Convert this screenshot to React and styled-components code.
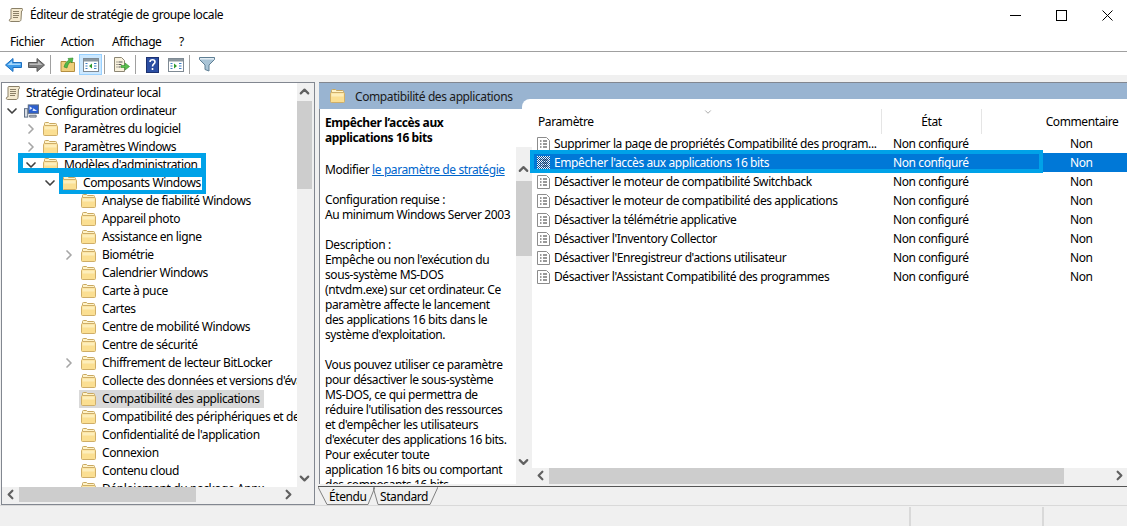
import React from "react";
import styled, { createGlobalStyle } from "styled-components";
import { ChevronDown, ChevronRight, ChevronUp, ChevronLeft } from "lucide-react";

const GlobalStyle = createGlobalStyle`
html, body { margin: 0; padding: 0; background: #f0f0f0; overflow: hidden; }
* { box-sizing: border-box; }
body { font-family: "Noto Sans", "Open Sans", sans-serif; font-size: 12px; color: #000; letter-spacing: -0.4px; }
`;

const Window = styled.div`
position: relative;
width: 1127px;
height: 526px;
display: flex;
flex-direction: column;
overflow: hidden;
`;

const TitleBar = styled.div`
height: 30px;
background: #fff;
display: flex;
align-items: center;
padding-left: 8px;
gap: 7px;
flex: none;
overflow: hidden;
`;

const TitleText = styled.span`
flex: 1;
line-height: 30px;
`;

const WinButton = styled.div`
width: 46px;
height: 30px;
flex: none;
display: flex;
align-items: center;
justify-content: center;
`;

const WinButtons = styled.div`
display: flex;
margin-right: -3px;
`;

const MenuBar = styled.div`
height: 22px;
background: #fff;
display: flex;
align-items: center;
padding: 1px 0 0 10px;
gap: 16px;
flex: none;
border-bottom: 1px solid #a0a0a0;
`;

const MenuItem = styled.span`
width: ${p => p.$w}px;
`;

const Toolbar = styled.div`
height: 23px;
background: #fff;
display: flex;
align-items: flex-start;
padding: 2px 0 0 2px;
flex: none;
`;

const ToolButton = styled.div`
width: 23px;
height: 21px;
display: flex;
align-items: center;
justify-content: center;
background: ${p => (p.$active ? "#cce8ff" : "transparent")};
border: 1px solid ${p => (p.$active ? "#99d1ff" : "transparent")};
`;

const ToolSep = styled.div`
width: 1px;
height: 19px;
background: #a0a0a0;
margin: 1px 5px 0 2px;
`;

const Main = styled.div`
flex: 1;
display: flex;
padding: 7px 0 0 1px;
min-height: 0;
`;

const TreePane = styled.div`
width: 314px;
height: 423px;
border: 1px solid #828790;
background: #f0f0f0;
display: grid;
grid-template-columns: 295px 15px;
grid-template-rows: 404px 15px;
padding: 0 1px 1px 0;
`;

const TreeList = styled.div`
background: #fff;
overflow: hidden;
padding-top: 1px;
`;

const Row = styled.div`
height: 18px;
display: flex;
align-items: center;
padding-left: ${p => p.$depth * 19 + 3}px;
white-space: nowrap;
position: relative;
`;

const Arrow = styled.span`
position: absolute;
left: ${p => p.$depth * 19 - 17}px;
top: 1px;
width: 16px;
height: 16px;
display: flex;
color: ${p => (p.$open ? "#404040" : "#a6a6a6")};
`;

const RowLabel = styled.span`
margin-left: 5px;
padding: 0 1px;
line-height: 18px;
`;

const FolderWrap = styled.div`
display: flex;
align-items: center;
background: ${p => (p.$selected ? "#d9d9d9" : "transparent")};
height: 18px;
padding: 0 3px 0 2px;
margin-left: -2px;
`;

const VScroll = styled.div`
position: relative;
background: #f0f0f0;
color: #606060;
`;

const HScroll = styled.div`
position: relative;
background: #f0f0f0;
color: #606060;
`;

const ThumbV = styled.div`
position: absolute;
left: 0;
right: 0;
top: ${p => p.$top}px;
height: ${p => p.$size}px;
background: #cdcdcd;
`;

const ThumbH = styled.div`
position: absolute;
top: 0;
bottom: 0;
left: ${p => p.$left}px;
width: ${p => p.$size}px;
background: #cdcdcd;
`;

const ScrollBtn = styled.span`
position: absolute;
display: flex;
align-items: center;
justify-content: center;
width: 15px;
height: 15px;
${p => p.$pos}
`;

const RightPane = styled.div`
width: 808px;
margin-left: 4px;
display: flex;
flex-direction: column;
border-top: 1px solid #828790;
`;

const Band = styled.div`
height: 26px;
background: #99b4d1;
display: flex;
align-items: flex-start;
padding: 6px 0 0 11px;
gap: 10px;
flex: none;
`;

const BandText = styled.span`
line-height: 16px;
color: #1a1a1a;
`;

const Content = styled.div`
flex: none;
height: 375px;
display: grid;
grid-template-columns: 197px 16px 1fr;
background: #fff;
position: relative;
`;

const Description = styled.div`
padding: 6px 0 0 5px;
line-height: 15px;
height: 375px;
overflow: hidden;
border-left: 1px solid #828790;
white-space: nowrap;
`;

const DescTitle = styled.div`
font-weight: 700;
margin-bottom: 17px;
`;

const DescBlock = styled.div`
margin-bottom: 15px;
`;

const Link = styled.span`
color: #0066cc;
text-decoration: underline;
`;

const DescScroll = styled.div`
position: relative;
margin-top: 38px;
background: #f0f0f0;
color: #606060;
`;

const ListPane = styled.div`
position: relative;
display: flex;
flex-direction: column;
min-width: 0;
`;

const Corner = styled.div`
position: absolute;
left: -10px;
top: -10px;
width: 605px;
height: 10px;
background: #fff;
border-top-left-radius: 8px;
`;

const ListHeader = styled.div`
display: grid;
grid-template-columns: 350px 100px 1fr;
height: 25px;
flex: none;
position: relative;
`;

const HeaderCell = styled.div`
line-height: 25px;
text-align: ${p => p.$align || "center"};
padding-left: ${p => p.$pad || 0}px;
border-right: ${p => (p.$last ? "none" : "1px solid #e5e5e5")};
`;

const SortMark = styled.span`
position: absolute;
left: 171px;
top: -2px;
display: flex;
color: #9a9a9a;
`;

const ListRows = styled.div`
flex: 1;
min-height: 0;
`;

const ListRow = styled.div`
display: grid;
grid-template-columns: 356px 177px 1fr;
height: 19px;
line-height: 19px;
padding-left: 5px;
white-space: nowrap;
background: ${p => (p.$selected ? "#0078d7" : "transparent")};
color: ${p => (p.$selected ? "#fff" : "#000")};
`;

const NameCell = styled.div`
display: flex;
align-items: center;
gap: 4px;
overflow: hidden;
`;

const ListHScroll = styled.div`
position: relative;
height: 16px;
flex: none;
background: #f0f0f0;
color: #606060;
`;

const TabStrip = styled.div`
height: 19px;
flex: none;
margin-top: 2px;
border-top: 1px solid #555;
display: flex;
margin-left: -1px;
`;

const Tab = styled.div`
position: relative;
width: ${p => p.$w}px;
height: 18px;
margin-right: -2px;
padding-left: ${p => p.$pad}px;
line-height: 19px;
`;

const TabOutline = styled.svg`
position: absolute;
left: 0;
top: 0;
`;

const TabLabel = styled.span`
position: relative;
`;

const StatusBar = styled.div`
height: 21px;
flex: none;
border-top: 1px solid #d9d9d9;
display: flex;
justify-content: flex-end;
`;

const StatusCell = styled.div`
width: ${p => p.$w}px;
border-left: 2px solid #d9d9d9;
margin-top: 1px;
`;

const Marker = styled.div`
position: absolute;
left: ${p => p.$x}px;
top: ${p => p.$y}px;
width: ${p => p.$w}px;
height: ${p => p.$h}px;
border: ${p => p.$b}px solid #00a2e8;
pointer-events: none;
`;

const Folder = () => (
  <svg width="15" height="14" viewBox="0 0 15 14" style={{ flex: "none" }}>
    <path d="M1.5 3 V1.5 a1 1 0 0 1 1-1 h3 l1 1 h6 a1 1 0 0 1 1 1 v1" fill="#fff3c8" stroke="#c9a860" />
    <rect x="0.5" y="3.5" width="14" height="10" rx="1" fill="#fbdf92" stroke="#cfae68" />
    <rect x="1.5" y="4.5" width="12" height="3" fill="#fdeebb" />
  </svg>
);

const Parchment = () => (
  <svg width="15" height="16" viewBox="0 0 15 16" style={{ flex: "none" }}>
    <path d="M4 1.5 h10 c1 0 1 2.5-.5 2.5 L13 12.5 c0 1.2-1 2-2 2 H2.5 c-1.6 0-1.6-2.5 0-2.5 H3 V3 c0-1 0-1.5 1-1.5z" fill="#f4ead0" stroke="#8a8068" />
    <path d="M5 4.5h6M5 6.5h6M5 8.5h6M5 10.5h5" stroke="#8a8068" />
  </svg>
);

const Computer = () => (
  <svg width="15" height="16" viewBox="0 0 16 16" style={{ flex: "none" }}>
    <rect x="4.5" y="1.5" width="11" height="9" fill="#2c5fd0" stroke="#5a6a80" />
    <path d="M6 3l3 2-3 2zM10 5l4 3H9z" fill="#dfeaff" />
    <rect x="0.5" y="5.5" width="3.5" height="9" fill="#d8dde4" stroke="#5a6a80" />
    <path d="M6 12.5h7v2H6z" fill="#b8c0cc" stroke="#6a7280" />
  </svg>
);

const PolicyIcon = ({ selected }) =>
  selected ? (
    <svg width="13" height="14" viewBox="0 0 13 14" style={{ flex: "none" }}>
      <defs>
        <pattern id="dither" width="2" height="2" patternUnits="userSpaceOnUse">
          <rect width="2" height="2" fill="#0a4f96" />
          <rect width="1" height="1" fill="#f2f6fb" />
          <rect x="1" y="1" width="1" height="1" fill="#f2f6fb" />
        </pattern>
      </defs>
      <rect width="13" height="14" fill="url(#dither)" />
      <path d="M3 4h1M3 7h1M3 10h1M5.5 4h5M5.5 7h5M5.5 10h5" stroke="#10305a" />
    </svg>
  ) : (
    <svg width="13" height="14" viewBox="0 0 13 14" style={{ flex: "none" }}>
      <path d="M0.5 0.5h9l3 3v10h-12z" fill="#fff" stroke="#8c8c8c" />
      <path d="M3 4h1.5M3 7h1.5M3 10h1.5M6 4h4M6 7h4M6 10h4" stroke="#333" />
    </svg>
  );

const BackIcon = () => (
  <svg width="17" height="14" viewBox="0 0 17 14">
    <path d="M8 0.5 L0.5 7 L8 13.5 V9.5 H16.5 V4.5 H8z" fill="#3d9be9" stroke="#1c6fc0" />
    <path d="M7 3 L2.5 7 H15.5 V5.5 H7z" fill="#a8d8fb" />
  </svg>
);

const ForwardIcon = () => (
  <svg width="17" height="14" viewBox="0 0 17 14">
    <path d="M9 0.5 L16.5 7 L9 13.5 V9.5 H0.5 V4.5 H9z" fill="#7d7d7d" stroke="#5a5a5a" />
    <path d="M10 3 L14.5 7 H1.5 V5.5 H10z" fill="#bdbdbd" />
  </svg>
);

const UpFolderIcon = () => (
  <svg width="16" height="16" viewBox="0 0 16 16">
    <path d="M1 4.5h5l1 1h7.5v9H1z" fill="#f0cf7c" stroke="#b58f40" />
    <path d="M4 10c1-4 3-6 5-7l-1-1.5 5-.5-1 5-1.5-1.5C9 6 7.5 8 7 11z" fill="#53b848" stroke="#2f8a2b" strokeWidth="0.6" />
  </svg>
);

const PanelIcon = ({ variant }) => (
  <svg width="16" height="14" viewBox="0 0 16 14">
    <rect x="0.5" y="0.5" width="15" height="13" fill="#fff" stroke="#7f8a94" />
    <rect x="1" y="1" width="14" height="2.5" fill="#8c979f" />
    <path d="M2.5 5.5h2M2.5 8h2M2.5 10.5h2M11 5.5h2.5M11 8h2.5M11 10.5h2.5" stroke="#3f7fc4" />
    {variant === "left" ? (
      <path d="M9 5.5v5l-3-2.5z" fill="#2f9a2f" />
    ) : (
      <path d="M6 5.5v5l3-2.5z" fill="#2f9a2f" />
    )}
  </svg>
);

const ExportIcon = () => (
  <svg width="17" height="16" viewBox="0 0 17 16">
    <path d="M1.5 0.5h7l3 3v11h-10z" fill="#f8f1dc" stroke="#8c8674" />
    <path d="M3.5 5h1M3.5 7.5h1M3.5 10h1M5.5 5h4M5.5 7.5h3M5.5 10h2" stroke="#555" />
    <path d="M8 8.5h4V6l4.5 3.5L12 13v-2.5H8z" fill="#5cbf4f" stroke="#3b9a33" strokeWidth="0.7" />
  </svg>
);

const HelpIcon = () => (
  <svg width="13" height="16" viewBox="0 0 13 16">
    <rect x="0.5" y="0.5" width="12" height="15" fill="#2b4ea3" stroke="#1c3170" />
    <path d="M4 5c0-3 5-3 5 0 0 2-2.5 2-2.5 4.5M6.5 11v2" fill="none" stroke="#fff" strokeWidth="1.6" />
  </svg>
);

const FilterIcon = () => (
  <svg width="16" height="15" viewBox="0 0 16 15">
    <path d="M0.5 0.5h15v2L10 8v6l-4-1.5V8L0.5 2.5z" fill="#a9c4d6" stroke="#5f7f94" />
    <path d="M1 1h14v1.5H1z" fill="#e2edf4" />
  </svg>
);

const treeRows = [
  { label: "Paramètres du logiciel", depth: 2, arrow: "closed" },
  { label: "Paramètres Windows", depth: 2, arrow: "closed" },
  { label: "Modèles d'administration", depth: 2, arrow: "open" },
  { label: "Composants Windows", depth: 3, arrow: "open" },
  { label: "Analyse de fiabilité Windows", depth: 4 },
  { label: "Appareil photo", depth: 4 },
  { label: "Assistance en ligne", depth: 4 },
  { label: "Biométrie", depth: 4, arrow: "closed" },
  { label: "Calendrier Windows", depth: 4 },
  { label: "Carte à puce", depth: 4 },
  { label: "Cartes", depth: 4 },
  { label: "Centre de mobilité Windows", depth: 4 },
  { label: "Centre de sécurité", depth: 4 },
  { label: "Chiffrement de lecteur BitLocker", depth: 4, arrow: "closed" },
  { label: "Collecte des données et versions d'évaluation Insider", depth: 4 },
  { label: "Compatibilité des applications", depth: 4, selected: true },
  { label: "Compatibilité des périphériques et des pilotes", depth: 4 },
  { label: "Confidentialité de l'application", depth: 4 },
  { label: "Connexion", depth: 4 },
  { label: "Contenu cloud", depth: 4 },
  { label: "Déploiement du package Appx", depth: 4 },
];

const policies = [
  "Supprimer la page de propriétés Compatibilité des program...",
  "Empêcher l'accès aux applications 16 bits",
  "Désactiver le moteur de compatibilité Switchback",
  "Désactiver le moteur de compatibilité des applications",
  "Désactiver la télémétrie applicative",
  "Désactiver l'Inventory Collector",
  "Désactiver l'Enregistreur d'actions utilisateur",
  "Désactiver l'Assistant Compatibilité des programmes",
];

const descBlocks = [
  ["Configuration requise :", "Au minimum Windows Server 2003"],
  [
    "Description :",
    "Empêche ou non l'exécution du",
    "sous-système MS-DOS",
    "(ntvdm.exe) sur cet ordinateur. Ce",
    "paramètre affecte le lancement",
    "des applications 16 bits dans le",
    "système d'exploitation.",
  ],
  [
    "Vous pouvez utiliser ce paramètre",
    "pour désactiver le sous-système",
    "MS-DOS, ce qui permettra de",
    "réduire l'utilisation des ressources",
    "et d'empêcher les utilisateurs",
    "d'exécuter des applications 16 bits.",
    "Pour exécuter toute",
    "application 16 bits ou comportant",
    "des composants 16 bits,",
  ],
];

export default function App() {
  return (
    <Window>
      <GlobalStyle />
      <TitleBar>
        <Parchment />
        <TitleText>Éditeur de stratégie de groupe locale</TitleText>
        <WinButtons>
          <WinButton>
            <svg width="11" height="11" viewBox="0 0 11 11"><path d="M0 5.5h11" stroke="#000" /></svg>
          </WinButton>
          <WinButton>
            <svg width="11" height="11" viewBox="0 0 11 11"><rect x="0.5" y="0.5" width="10" height="10" fill="none" stroke="#000" /></svg>
          </WinButton>
          <WinButton>
            <svg width="11" height="11" viewBox="0 0 11 11"><path d="M0.5 0.5l10 10M10.5 0.5l-10 10" stroke="#000" /></svg>
          </WinButton>
        </WinButtons>
      </TitleBar>
      <MenuBar>
        <MenuItem $w={35}>Fichier</MenuItem>
        <MenuItem $w={35}>Action</MenuItem>
        <MenuItem $w={51}>Affichage</MenuItem>
        <MenuItem>?</MenuItem>
      </MenuBar>
      <Toolbar>
        <ToolButton><BackIcon /></ToolButton>
        <ToolButton><ForwardIcon /></ToolButton>
        <ToolSep />
        <ToolButton><UpFolderIcon /></ToolButton>
        <ToolButton $active><PanelIcon variant="left" /></ToolButton>
        <ToolSep />
        <ToolButton><ExportIcon /></ToolButton>
        <ToolSep />
        <ToolButton><HelpIcon /></ToolButton>
        <ToolButton><PanelIcon variant="right" /></ToolButton>
        <ToolSep />
        <ToolButton><FilterIcon /></ToolButton>
      </Toolbar>
      <Main>
        <TreePane>
          <TreeList>
            <Row $depth={0}><Parchment /><RowLabel>Stratégie Ordinateur local</RowLabel></Row>
            <Row $depth={1}>
              <Arrow $depth={1} $open><ChevronDown size={16} strokeWidth={2.5} /></Arrow>
              <Computer /><RowLabel>Configuration ordinateur</RowLabel>
            </Row>
            {treeRows.map(r => (
              <Row key={r.label} $depth={r.depth}>
                {r.arrow && (
                  <Arrow $depth={r.depth} $open={r.arrow === "open"}>
                    {r.arrow === "open" ? <ChevronDown size={16} strokeWidth={2.5} /> : <ChevronRight size={16} strokeWidth={2.5} />}
                  </Arrow>
                )}
                <FolderWrap $selected={r.selected}>
                  <Folder /><RowLabel>{r.label}</RowLabel>
                </FolderWrap>
              </Row>
            ))}
          </TreeList>
          <VScroll>
            <ScrollBtn $pos="top: 1px; left: 0;"><ChevronUp size={15} strokeWidth={3.5} /></ScrollBtn>
            <ThumbV $top={18} $size={88} />
            <ScrollBtn $pos="bottom: 1px; left: 0;"><ChevronDown size={15} strokeWidth={3.5} /></ScrollBtn>
          </VScroll>
          <HScroll>
            <ScrollBtn $pos="left: 1px; top: 0;"><ChevronLeft size={15} strokeWidth={3.5} /></ScrollBtn>
            <ThumbH $left={17} $size={177} />
            <ScrollBtn $pos="right: 1px; top: 0;"><ChevronRight size={15} strokeWidth={3.5} /></ScrollBtn>
          </HScroll>
        </TreePane>
        <RightPane>
          <Band>
            <Folder />
            <BandText>Compatibilité des applications</BandText>
          </Band>
          <Content>
            <Description>
              <DescTitle>Empêcher l’accès aux<br />applications 16 bits</DescTitle>
              <DescBlock>Modifier <Link>le paramètre de stratégie</Link></DescBlock>
              {descBlocks.map(lines => (
                <DescBlock key={lines[0]}>
                  {lines.map(l => <div key={l}>{l}</div>)}
                </DescBlock>
              ))}
            </Description>
            <DescScroll>
              <ScrollBtn $pos="top: 14px; left: 0;"><ChevronUp size={16} strokeWidth={3.5} /></ScrollBtn>
              <ThumbV $top={34} $size={75} />
              <ScrollBtn $pos="bottom: 15px; left: 0;"><ChevronDown size={16} strokeWidth={3.5} /></ScrollBtn>
            </DescScroll>
            <ListPane>
              <Corner />
              <ListHeader>
                <HeaderCell $align="left" $pad={6}>Paramètre</HeaderCell>
                <HeaderCell>État</HeaderCell>
                <HeaderCell $last $pad={55}>Commentaire</HeaderCell>
                <SortMark><ChevronDown size={10} /></SortMark>
              </ListHeader>
              <ListRows>
                {policies.map((p, i) => (
                  <ListRow key={p} $selected={i === 1}>
                    <NameCell><PolicyIcon selected={i === 1} />{p}</NameCell>
                    <span>Non configuré</span>
                    <span>Non</span>
                  </ListRow>
                ))}
              </ListRows>
              <ListHScroll>
                <ScrollBtn $pos="left: 1px; top: 0;"><ChevronLeft size={15} strokeWidth={3.5} /></ScrollBtn>
                <ThumbH $left={17} $size={515} />
                <ScrollBtn $pos="right: 0; top: 0;"><ChevronRight size={15} strokeWidth={3.5} /></ScrollBtn>
              </ListHScroll>
            </ListPane>
          </Content>
          <TabStrip>
            <Tab $w={57} $pad={11}>
              <TabOutline width="57" height="18"><path d="M0 0 L9 17.5 H50 L57 0" fill="none" stroke="#808080" /></TabOutline>
              <TabLabel>Étendu</TabLabel>
            </Tab>
            <Tab $w={65} $pad={7}>
              <TabOutline width="65" height="18"><path d="M0 0 L5 17.5 H57 L65 0" fill="none" stroke="#808080" /></TabOutline>
              <TabLabel>Standard</TabLabel>
            </Tab>
          </TabStrip>
        </RightPane>
      </Main>
      <StatusBar>
        <StatusCell $w={133} />
        <StatusCell $w={85} />
      </StatusBar>
      <Marker $x={18} $y={153} $w={188} $h={20} $b={5} />
      <Marker $x={59} $y={173} $w={147} $h={21} $b={4} />
      <Marker $x={530} $y={150} $w={513} $h={23} $b={4} />
    </Window>
  );
}
